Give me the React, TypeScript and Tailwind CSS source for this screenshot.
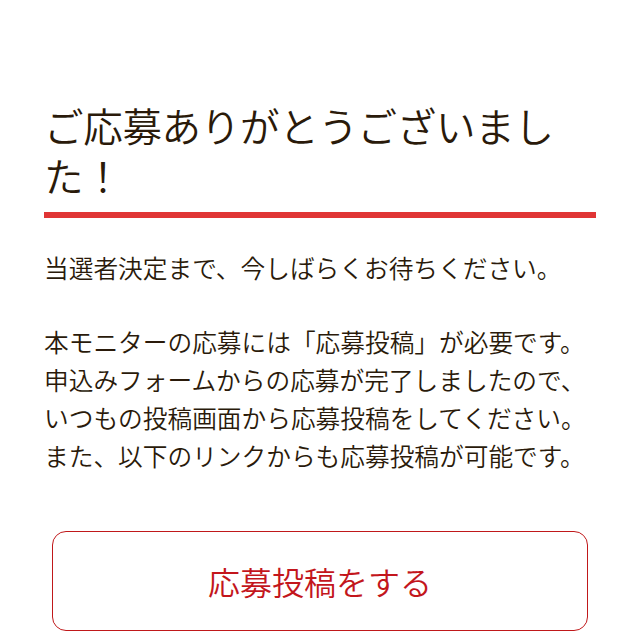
export default function App() {
  const font = { fontFamily: '"Noto Sans CJK JP", "Noto Sans", sans-serif' };
  return (
    <div className="min-h-[640px] bg-white px-[44px] pt-[100px] text-[#2a1a0a]" style={font}>
      <h1 className="pr-[20px] text-[39.5px] font-[350] leading-[50px] tracking-[-0.3px]">
        ご応募ありがとうございました！
      </h1>
      <div className="mt-[12px] h-[6px] bg-[#e03535]" />
      <div className="mt-[30px] text-[24.7px] font-[350] leading-[38px]">
        <p>当選者決定まで、今しばらくお待ちください。</p>
        <p className="mt-[36px]">
          本モニターの応募には「応募投稿」が必要です。
          <br />
          申込みフォームからの応募が完了しましたので、
          <br />
          いつもの投稿画面から応募投稿をしてください。
          <br />
          また、以下のリンクからも応募投稿が可能です。
        </p>
      </div>
      <div className="mx-[8px] mt-[57px]">
        <a
          href="#"
          className="flex h-[100px] items-center justify-center rounded-[14px] border-[1.5px] border-[#c0181a] text-[32px] font-[350] text-[#c3161c]"
        >
          応募投稿をする
        </a>
      </div>
    </div>
  );
}
